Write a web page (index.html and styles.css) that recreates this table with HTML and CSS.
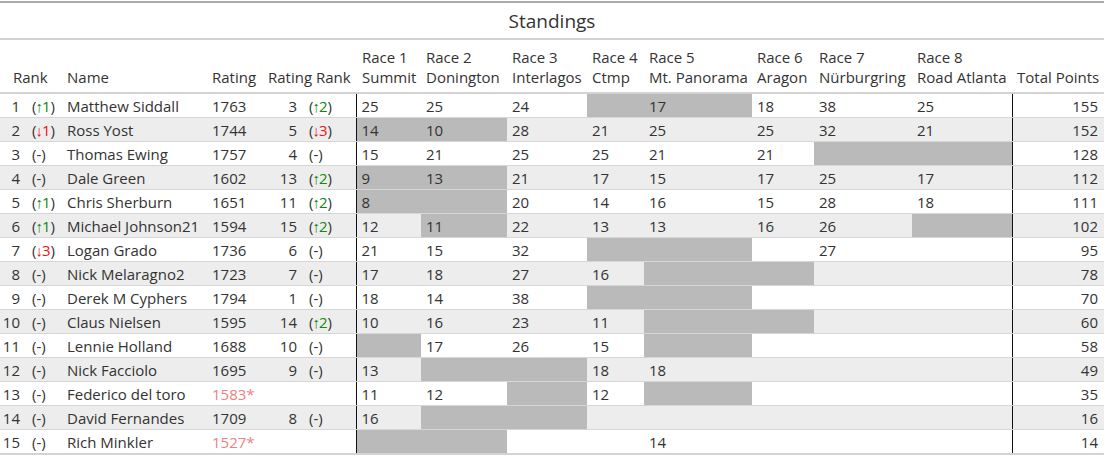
FILE: index.html
```html
<!DOCTYPE html>
<html>
<head>
<meta charset="utf-8">
<title>Standings</title>
<link rel="stylesheet" href="styles.css">
</head>
<body>
<div class="standings">
  <div class="title">Standings</div>
  <table class="grid">
    <colgroup>
      <col class="w-rank"><col class="w-rchg"><col class="w-name"><col class="w-rating"><col class="w-rrnum"><col class="w-rrchg">
      <col class="w-r1"><col class="w-r2"><col class="w-r3"><col class="w-r4"><col class="w-r5"><col class="w-r6"><col class="w-r7"><col class="w-r8"><col class="w-total">
    </colgroup>
    <thead>
      <tr>
        <th colspan="2" class="h-rank">Rank</th>
        <th>Name</th>
        <th>Rating</th>
        <th colspan="2">Rating Rank</th>
        <th class="h-first">Race 1<br>Summit</th>
        <th>Race 2<br>Donington</th>
        <th>Race 3<br>Interlagos</th>
        <th>Race 4<br>Ctmp</th>
        <th>Race 5<br>Mt. Panorama</th>
        <th>Race 6<br>Aragon</th>
        <th>Race 7<br>Nürburgring</th>
        <th>Race 8<br>Road Atlanta</th>
        <th class="h-total">Total Points</th>
      </tr>
    </thead>
    <tbody>
      <tr>
        <td class="num">1</td><td class="chg">(<span class="up"><span class="arr">↑</span>1</span>)</td><td>Matthew Siddall</td><td>1763</td><td class="num">3</td><td class="chg">(<span class="up"><span class="arr">↑</span>2</span>)</td>
        <td class="first">25</td><td>25</td><td>24</td><td class="drop"></td><td class="drop">17</td><td>18</td><td>38</td><td>25</td><td class="total">155</td>
      </tr>
      <tr>
        <td class="num">2</td><td class="chg">(<span class="down"><span class="arr">↓</span>1</span>)</td><td>Ross Yost</td><td>1744</td><td class="num">5</td><td class="chg">(<span class="down"><span class="arr">↓</span>3</span>)</td>
        <td class="first drop">14</td><td class="drop">10</td><td>28</td><td>21</td><td>25</td><td>25</td><td>32</td><td>21</td><td class="total">152</td>
      </tr>
      <tr>
        <td class="num">3</td><td class="chg">(-)</td><td>Thomas Ewing</td><td>1757</td><td class="num">4</td><td class="chg">(-)</td>
        <td class="first">15</td><td>21</td><td>25</td><td>25</td><td>21</td><td>21</td><td class="drop"></td><td class="drop"></td><td class="total">128</td>
      </tr>
      <tr>
        <td class="num">4</td><td class="chg">(-)</td><td>Dale Green</td><td>1602</td><td class="num">13</td><td class="chg">(<span class="up"><span class="arr">↑</span>2</span>)</td>
        <td class="first drop">9</td><td class="drop">13</td><td>21</td><td>17</td><td>15</td><td>17</td><td>25</td><td>17</td><td class="total">112</td>
      </tr>
      <tr>
        <td class="num">5</td><td class="chg">(<span class="up"><span class="arr">↑</span>1</span>)</td><td>Chris Sherburn</td><td>1651</td><td class="num">11</td><td class="chg">(<span class="up"><span class="arr">↑</span>2</span>)</td>
        <td class="first drop">8</td><td class="drop"></td><td>20</td><td>14</td><td>16</td><td>15</td><td>28</td><td>18</td><td class="total">111</td>
      </tr>
      <tr>
        <td class="num">6</td><td class="chg">(<span class="up"><span class="arr">↑</span>1</span>)</td><td>Michael Johnson21</td><td>1594</td><td class="num">15</td><td class="chg">(<span class="up"><span class="arr">↑</span>2</span>)</td>
        <td class="first">12</td><td class="drop">11</td><td>22</td><td>13</td><td>13</td><td>16</td><td>26</td><td class="drop"></td><td class="total">102</td>
      </tr>
      <tr>
        <td class="num">7</td><td class="chg">(<span class="down"><span class="arr">↓</span>3</span>)</td><td>Logan Grado</td><td>1736</td><td class="num">6</td><td class="chg">(-)</td>
        <td class="first">21</td><td>15</td><td>32</td><td class="drop"></td><td class="drop"></td><td></td><td>27</td><td></td><td class="total">95</td>
      </tr>
      <tr>
        <td class="num">8</td><td class="chg">(-)</td><td>Nick Melaragno2</td><td>1723</td><td class="num">7</td><td class="chg">(-)</td>
        <td class="first">17</td><td>18</td><td>27</td><td>16</td><td class="drop"></td><td class="drop"></td><td></td><td></td><td class="total">78</td>
      </tr>
      <tr>
        <td class="num">9</td><td class="chg">(-)</td><td>Derek M Cyphers</td><td>1794</td><td class="num">1</td><td class="chg">(-)</td>
        <td class="first">18</td><td>14</td><td>38</td><td class="drop"></td><td class="drop"></td><td></td><td></td><td></td><td class="total">70</td>
      </tr>
      <tr>
        <td class="num">10</td><td class="chg">(-)</td><td>Claus Nielsen</td><td>1595</td><td class="num">14</td><td class="chg">(<span class="up"><span class="arr">↑</span>2</span>)</td>
        <td class="first">10</td><td>16</td><td>23</td><td>11</td><td class="drop"></td><td class="drop"></td><td></td><td></td><td class="total">60</td>
      </tr>
      <tr>
        <td class="num">11</td><td class="chg">(-)</td><td>Lennie Holland</td><td>1688</td><td class="num">10</td><td class="chg">(-)</td>
        <td class="first drop"></td><td>17</td><td>26</td><td>15</td><td class="drop"></td><td></td><td></td><td></td><td class="total">58</td>
      </tr>
      <tr>
        <td class="num">12</td><td class="chg">(-)</td><td>Nick Facciolo</td><td>1695</td><td class="num">9</td><td class="chg">(-)</td>
        <td class="first">13</td><td class="drop"></td><td class="drop"></td><td>18</td><td>18</td><td></td><td></td><td></td><td class="total">49</td>
      </tr>
      <tr>
        <td class="num">13</td><td class="chg">(-)</td><td>Federico del toro</td><td class="prov">1583*</td><td class="num"></td><td class="chg"></td>
        <td class="first">11</td><td>12</td><td class="drop"></td><td>12</td><td class="drop"></td><td></td><td></td><td></td><td class="total">35</td>
      </tr>
      <tr>
        <td class="num">14</td><td class="chg">(-)</td><td>David Fernandes</td><td>1709</td><td class="num">8</td><td class="chg">(-)</td>
        <td class="first">16</td><td class="drop"></td><td class="drop"></td><td></td><td></td><td></td><td></td><td></td><td class="total">16</td>
      </tr>
      <tr>
        <td class="num">15</td><td class="chg">(-)</td><td>Rich Minkler</td><td class="prov">1527*</td><td class="num"></td><td class="chg"></td>
        <td class="first drop"></td><td class="drop"></td><td></td><td></td><td>14</td><td></td><td></td><td></td><td class="total">14</td>
      </tr>
    </tbody>
  </table>
</div>
</body>
</html>
```

FILE: styles.css
```css
html, body {
  margin: 0;
  padding: 0;
  background: #ffffff;
}

body {
  font-family: "Open Sans", "Noto Sans", "Liberation Sans", sans-serif;
  color: #333333;
}

.standings {
  padding-top: 1px;
  width: 1104px;
}

.title {
  border-top: 2px solid #ababab;
  border-bottom: 2px solid #d3d3d3;
  height: 35px;
  line-height: 37px;
  text-align: center;
  font-size: 19px;
}

.grid {
  width: 1104px;
  table-layout: fixed;
  border-collapse: collapse;
  font-size: 15px;
}

.w-rank { width: 25px; }
.w-rchg { width: 37px; }
.w-name { width: 145px; }
.w-rating { width: 56px; }
.w-rrnum { width: 39px; }
.w-rrchg { width: 54px; }
.w-r1 { width: 65px; }
.w-r2 { width: 86px; }
.w-r3 { width: 80px; }
.w-r4 { width: 57px; }
.w-r5 { width: 108px; }
.w-r6 { width: 62px; }
.w-r7 { width: 98px; }
.w-r8 { width: 100px; }
.w-total { width: 92px; }

.grid th {
  font-weight: normal;
  text-align: left;
  vertical-align: bottom;
  line-height: 20px;
  padding: 7px 0 5px 5px;
  white-space: nowrap;
  border-bottom: 2px solid #d3d3d3;
}

.grid th.h-rank { padding-left: 13px; }
.grid th.h-first { padding-left: 6px; }
.grid th.h-total { text-align: right; padding-right: 6px; }

.grid td {
  height: 21px;
  line-height: 21px;
  padding: 2px 0 0 5px;
  border-bottom: 1px solid #d6d6d6;
  white-space: nowrap;
}

.grid tbody tr:nth-child(even) td { background: #ededed; }
.grid tbody tr:last-child td { border-bottom: 2px solid #d3d3d3; }

.grid td.num { text-align: right; padding-right: 5px; padding-left: 0; }
.grid td.chg { padding-left: 7px; }
.grid td.first { border-left: 1px solid #111111; }
.grid td.total { border-left: 1px solid #111111; text-align: right; padding-right: 6px; }

.grid tbody tr td.drop { background: #bababa; }

.arr {
  font-family: "Liberation Sans", sans-serif;
  margin: 0 -1px;
}

.up { color: #0d8a0d; }
.down { color: #f01010; }
.prov { color: #f08080; }
```
